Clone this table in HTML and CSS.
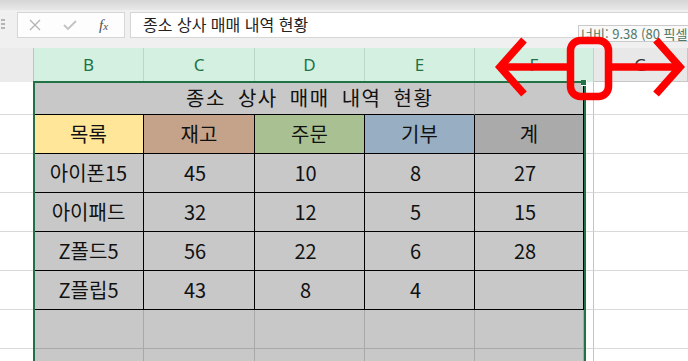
FILE: index.html
```html
<!DOCTYPE html>
<html lang="ko">
<head>
<meta charset="utf-8">
<title>종소 상사 매매 내역 현황</title>
<link rel="stylesheet" href="styles.css">
</head>
<body>
<div class="app">
  <div class="ribbon-edge"></div>

  <div class="fbar">
    <div class="grip">
      <svg width="6" height="14" viewBox="0 0 6 14"><rect x="0" y="1" width="4" height="2" fill="#b4b4b4"/><rect x="0" y="5" width="4" height="2" fill="#b4b4b4"/><rect x="0" y="9" width="4" height="2" fill="#b4b4b4"/></svg>
    </div>
    <div class="fbtns">
      <span class="fbtn cancel">
        <svg width="12" height="12" viewBox="0 0 12 12"><path d="M1 1 L11 11 M11 1 L1 11" stroke="#b3b3b3" stroke-width="1.3" fill="none"/></svg>
      </span>
      <span class="fbtn enter">
        <svg width="14" height="10" viewBox="0 0 14 10"><path d="M1 5 L5 9 L13 1" stroke="#c2c2c2" stroke-width="1.8" fill="none"/></svg>
      </span>
      <span class="fx">f<span class="fx-x">x</span></span>
    </div>
    <div class="formula">종소 상사 매매 내역 현황</div>
  </div>

  <div class="colheads">
    <div class="corner"></div>
    <div class="ch sel">B</div>
    <div class="ch sel">C</div>
    <div class="ch sel">D</div>
    <div class="ch sel">E</div>
    <div class="ch sel">F</div>
    <div class="ch other">G</div>
  </div>

  <div class="sheet">
    <!-- row 1: title -->
    <div class="rh"></div>
    <div class="c title">종소 상사 매매 내역 현황</div>
    <div class="c title-f"></div>
    <div class="gap"></div>
    <div class="out"></div>

    <!-- row 2: headings -->
    <div class="rh"></div>
    <div class="c t h-item">목록</div>
    <div class="c t h-stock">재고</div>
    <div class="c t h-order">주문</div>
    <div class="c t h-gift">기부</div>
    <div class="c t h-total">계</div>
    <div class="gap"></div>
    <div class="out"></div>

    <!-- data rows -->
    <div class="rh"></div>
    <div class="c t">아이폰15</div>
    <div class="c t num">45</div>
    <div class="c t num">10</div>
    <div class="c t num">8</div>
    <div class="c t num">27</div>
    <div class="gap"></div>
    <div class="out"></div>

    <div class="rh"></div>
    <div class="c t">아이패드</div>
    <div class="c t num">32</div>
    <div class="c t num">12</div>
    <div class="c t num">5</div>
    <div class="c t num">15</div>
    <div class="gap"></div>
    <div class="out"></div>

    <div class="rh"></div>
    <div class="c t">Z폴드5</div>
    <div class="c t num">56</div>
    <div class="c t num">22</div>
    <div class="c t num">6</div>
    <div class="c t num">28</div>
    <div class="gap"></div>
    <div class="out"></div>

    <div class="rh"></div>
    <div class="c t">Z플립5</div>
    <div class="c t num">43</div>
    <div class="c t num">8</div>
    <div class="c t num">4</div>
    <div class="c t num"></div>
    <div class="gap"></div>
    <div class="out"></div>

    <!-- empty selected rows -->
    <div class="rh"></div>
    <div class="c blank"></div>
    <div class="c blank"></div>
    <div class="c blank"></div>
    <div class="c blank"></div>
    <div class="c blank last"></div>
    <div class="gap"></div>
    <div class="out"></div>

    <div class="rh"></div>
    <div class="c blank"></div>
    <div class="c blank"></div>
    <div class="c blank"></div>
    <div class="c blank"></div>
    <div class="c blank last"></div>
    <div class="gap"></div>
    <div class="out"></div>
  </div>

  <!-- selection frame and fill handle -->
  <div class="selection"></div>
  <div class="handle"></div>

  <!-- column width tooltip -->
  <div class="tip">너비: 9.38 (80 픽셀)</div>

  <!-- red resize annotation -->
  <svg class="marks" width="688" height="361" viewBox="0 0 688 361">
    <g stroke="#ff0000" stroke-width="7.5" fill="none">
      <line x1="502" y1="67" x2="568" y2="67"/>
      <polyline points="524,40 500,67 524,94" stroke-linejoin="miter"/>
      <rect x="570.5" y="40.5" width="38" height="56" rx="10"/>
      <line x1="612" y1="67" x2="678" y2="67"/>
      <polyline points="656,40 680,67 656,94" stroke-linejoin="miter"/>
    </g>
  </svg>
</div>
</body>
</html>
```

FILE: styles.css
```css
html, body {
  margin: 0;
  padding: 0;
}

body {
  width: 688px;
  height: 361px;
  overflow: hidden;
  background: #ffffff;
  font-family: "Noto Sans CJK KR", "Noto Sans", sans-serif;
}

.app {
  position: relative;
  width: 688px;
  height: 361px;
  overflow: hidden;
}

/* ribbon edge above the formula bar */
.ribbon-edge {
  height: 10px;
  background: linear-gradient(#d6d6d6, #e8e8e8);
}

/* formula bar */
.fbar {
  height: 38px;
  box-sizing: border-box;
  padding-top: 2px;
  background: #f0f0f0;
  display: flex;
  align-items: flex-start;
}

.grip {
  width: 17px;
  height: 26px;
  display: flex;
  align-items: center;
  padding-left: 1px;
  box-sizing: border-box;
}

.fbtns {
  width: 108px;
  height: 26px;
  box-sizing: border-box;
  border: 1px solid #d6d6d6;
  background: #fdfdfd;
  display: flex;
  align-items: center;
}

.fbtn {
  display: flex;
  align-items: center;
  justify-content: center;
}

.cancel {
  margin-left: 11px;
}

.enter {
  margin-left: 22px;
}

.fx {
  margin-left: 22px;
  font-family: "Liberation Serif", serif;
  font-style: italic;
  font-size: 15px;
  color: #505050;
  line-height: 1;
}

.fx-x {
  font-size: 11px;
}

.formula {
  flex: 1;
  margin-left: 5px;
  height: 26px;
  box-sizing: border-box;
  border: 1px solid #d6d6d6;
  border-right: none;
  background: #ffffff;
  padding-left: 12px;
  font-size: 16px;
  line-height: 23px;
  color: #222222;
  white-space: nowrap;
}

/* column headings */
.colheads {
  display: grid;
  grid-template-columns: 34px 110px 111px 110px 110px 119px 1fr;
  height: 34px;
}

.corner {
  background: #ebebeb;
  border-right: 1px solid #c2c2c2;
}

.ch {
  display: flex;
  align-items: center;
  justify-content: center;
  font-family: "Noto Sans", sans-serif;
  font-size: 17px;
  box-sizing: border-box;
  border-right: 1px solid #c6c6c6;
  padding-bottom: 1px;
}

.ch.sel {
  background: #d3f0e0;
  color: #217346;
  border-right-color: #bcd6c6;
}

.ch.other {
  background: #e8e8e8;
  color: #333333;
  border-bottom: 1px solid #c8c8c8;
}

/* cells */
.sheet {
  display: grid;
  grid-template-columns: 34px 110px 111px 110px 110px 109px 10px 1fr;
  grid-template-rows: 33px repeat(7, 39px);
}

.sheet > div {
  box-sizing: border-box;
}

.rh {
  background: #ffffff;
  border-right: 1px solid #c2c2c2;
  border-bottom: 1px solid #d9d9d9;
}

.gap {
  background: #ffffff;
  border-right: 1px solid #c4c4c4;
  border-bottom: 1px solid #d9d9d9;
}

.out {
  background: #ffffff;
  border-bottom: 1px solid #d9d9d9;
}

.c {
  display: flex;
  align-items: center;
  justify-content: center;
  font-size: 20px;
  color: #111111;
  white-space: nowrap;
  padding-bottom: 2px;
}

.title {
  grid-column: span 4;
  justify-content: flex-start;
  padding-left: 152px;
  letter-spacing: 1.5px;
  word-spacing: 5px;
  background: #c8c8c8;
  border-right: 1px solid #b2b2b2;
  border-bottom: 1px solid #000000;
}

.title-f {
  background: #c8c8c8;
  border-right: 1px solid #000000;
  border-bottom: 1px solid #000000;
}

.t {
  background: #c8c8c8;
  border-right: 1px solid #000000;
  border-bottom: 1px solid #000000;
}

.num {
  padding-right: 8px;
}

.h-item { background: #ffe699; }
.h-stock { background: #c5a38b; }
.h-order { background: #a9c092; }
.h-gift { background: #98aec3; }
.h-total { background: #aaaaaa; }

.blank {
  background: #c8c8c8;
  border-right: 1px solid #a9a9a9;
  border-bottom: 1px solid #a9a9a9;
}

/* selection frame laid over the cells */
.selection {
  position: absolute;
  left: 33px;
  top: 81px;
  width: 553px;
  height: 300px;
  box-sizing: border-box;
  border: 2px solid #217346;
  border-bottom: none;
}

.handle {
  position: absolute;
  left: 581px;
  top: 80px;
  width: 5px;
  height: 5px;
  background: #217346;
  border-right: 1px solid #ffffff;
  border-bottom: 1px solid #ffffff;
}

/* width tooltip */
.tip {
  position: absolute;
  left: 578px;
  top: 25px;
  height: 17px;
  box-sizing: border-box;
  padding: 0 3px 0 2px;
  background: #f9f9f9;
  border: 1px solid #cacaca;
  font-size: 13px;
  line-height: 15px;
  color: #4f7766;
  white-space: nowrap;
}

.marks {
  position: absolute;
  left: 0;
  top: 0;
  pointer-events: none;
}
```
